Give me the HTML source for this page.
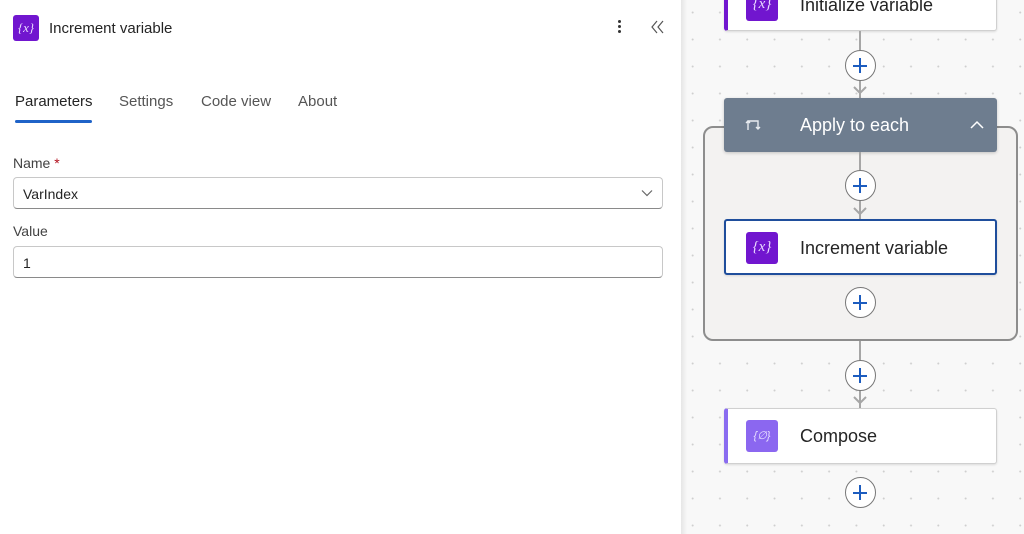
<!DOCTYPE html>
<html><head><meta charset="utf-8"><style>
*{box-sizing:border-box;margin:0;padding:0}
body{width:1024px;height:534px;overflow:hidden;font-family:"Liberation Sans",sans-serif;background:#fff;position:relative;color:#242424}
.left{position:absolute;left:0;top:0;width:681px;height:534px;background:#fff}
.sep{position:absolute;left:681px;top:0;width:6px;height:534px;background:linear-gradient(to right,#e6e6e6,#f7f7f7)}
.canvas{position:absolute;left:687px;top:0;right:0;height:534px;background-color:#f8f8f8;background-image:radial-gradient(circle,#cfcfcf 0.8px,transparent 1.2px);background-size:27.3px 27px;background-position:-8px -1px}
.abs{position:absolute}
.ico{position:absolute;background:#7116cf;border-radius:3px;color:#e8d8ff;font-family:"Liberation Serif",serif;font-style:italic;text-align:center}
.card{position:absolute;left:724px;width:273px;background:#fff;border:1px solid #d0d0d0;border-radius:3px;box-shadow:0 1px 2px rgba(0,0,0,.12)}
.plus{position:absolute;width:31px;height:31px;border:1.5px solid #777;border-radius:50%;background:#fff}
.plus:before{content:"";position:absolute;left:7px;top:13.5px;width:14px;height:2px;background:#1c5cbf}
.plus:after{content:"";position:absolute;left:13px;top:7px;width:2px;height:15px;background:#1c5cbf}
.line{position:absolute;left:859px;width:2px;background:#a6a6a6}
.arrow{position:absolute;left:853px;width:14px;height:8px}
.lbl{position:absolute;left:13px;font-size:14px;color:#424242}
.inp{position:absolute;left:13px;width:650px;height:32px;border:1px solid #c8c8c8;border-bottom-color:#8a8a8a;border-radius:4px;font-size:14px;padding:8px 9px;color:#242424}
</style></head><body>
<div class="left">
  <div class="ico" style="left:13px;top:15px;width:26px;height:26px;font-size:13px;line-height:26px">{x}</div>
  <div class="abs" style="left:49px;top:20px;font-size:15px;color:#242424">Increment variable</div>
  <div class="abs" style="left:618px;top:20px;width:3px;height:3px;background:#333;border-radius:50%;box-shadow:0 5px 0 #333,0 10px 0 #333"></div>
  <svg class="abs" style="left:651px;top:20px" width="13" height="14" viewBox="0 0 13 14"><path d="M6 1 1 7 6 13M12 1 7 7 12 13" fill="none" stroke="#555" stroke-width="1.2"/></svg>
  <div class="abs" style="left:15px;top:93px;font-size:15px;color:#242424">Parameters</div>
  <div class="abs" style="left:119px;top:93px;font-size:15px;color:#555">Settings</div>
  <div class="abs" style="left:201px;top:93px;font-size:15px;color:#555">Code view</div>
  <div class="abs" style="left:298px;top:93px;font-size:15px;color:#555">About</div>
  <div class="abs" style="left:15px;top:120px;width:77px;height:3px;background:#1f63c8;border-radius:2px"></div>
  <div class="lbl" style="top:155px">Name <span style="color:#b10e1c">*</span></div>
  <div class="inp" style="top:177px">VarIndex
    <svg class="abs" style="right:9px;top:11px" width="12" height="8" viewBox="0 0 12 8"><path d="M1 1.5 6 6.5 11 1.5" fill="none" stroke="#666" stroke-width="1.2"/></svg></div>
  <div class="lbl" style="top:223px">Value</div>
  <div class="inp" style="top:246px">1</div>
</div>
<div class="sep"></div>
<div class="canvas"></div>

<div class="card" style="top:-20px;height:51px;border-left:4px solid #7116cf">
  <div class="ico" style="left:18px;top:8px;width:32px;height:32px;font-size:15px;line-height:30px;border-radius:3px">{x}</div>
  <div class="abs" style="left:72px;top:14px;font-size:18px;color:#242424">Initialize variable</div>
</div>
<div class="line" style="top:31px;height:67px"></div>
<svg class="arrow" style="top:86px" viewBox="0 0 14 8"><path d="M1 1 7 7 13 1" fill="none" stroke="#a6a6a6" stroke-width="2"/></svg>
<div class="plus" style="left:845px;top:50px"></div>

<div class="abs" style="left:703px;top:126px;width:315px;height:215px;border:2px solid #8d8d8d;border-radius:10px;background:#f3f2f1"></div>
<div class="abs" style="left:724px;top:98px;width:273px;height:54px;background:#6e7d8f;border-radius:3px;box-shadow:0 1px 3px rgba(0,0,0,.2)">
  <svg class="abs" style="left:21px;top:20px" width="16" height="14" viewBox="0 0 16 14"><path d="M3 12V3h10v8M11 9l2 2 2-2M1 5l2-2 2 2" fill="none" stroke="#e8ecf0" stroke-width="1.4"/></svg>
  <div class="abs" style="left:76px;top:17px;font-size:18px;color:#fff">Apply to each</div>
  <svg class="abs" style="left:246px;top:22px" width="14" height="9" viewBox="0 0 14 9"><path d="M1 8 7 2 13 8" fill="none" stroke="#fff" stroke-width="1.5"/></svg>
</div>
<div class="line" style="top:152px;height:67px"></div>
<svg class="arrow" style="top:207px" viewBox="0 0 14 8"><path d="M1 1 7 7 13 1" fill="none" stroke="#a6a6a6" stroke-width="2"/></svg>
<div class="plus" style="left:845px;top:170px"></div>

<div class="card" style="top:219px;height:56px;border:2px solid #1f4e9c">
  <div class="ico" style="left:20px;top:11px;width:32px;height:32px;font-size:15px;line-height:30px">{x}</div>
  <div class="abs" style="left:74px;top:17px;font-size:18px;color:#242424">Increment variable</div>
</div>
<div class="plus" style="left:845px;top:287px"></div>

<div class="line" style="top:341px;height:67px"></div>
<svg class="arrow" style="top:396px" viewBox="0 0 14 8"><path d="M1 1 7 7 13 1" fill="none" stroke="#a6a6a6" stroke-width="2"/></svg>
<div class="plus" style="left:845px;top:360px"></div>

<div class="card" style="top:408px;height:56px;border-left:4px solid #8a6cf0">
  <div class="abs" style="left:18px;top:11px;width:32px;height:32px;background:#8b67f0;border-radius:3px;color:#e8e0ff;font-size:11px;line-height:32px;text-align:center;font-style:italic">{∅}</div>
  <div class="abs" style="left:72px;top:17px;font-size:18px;color:#242424">Compose</div>
</div>
<div class="plus" style="left:845px;top:477px"></div>
</body></html>
